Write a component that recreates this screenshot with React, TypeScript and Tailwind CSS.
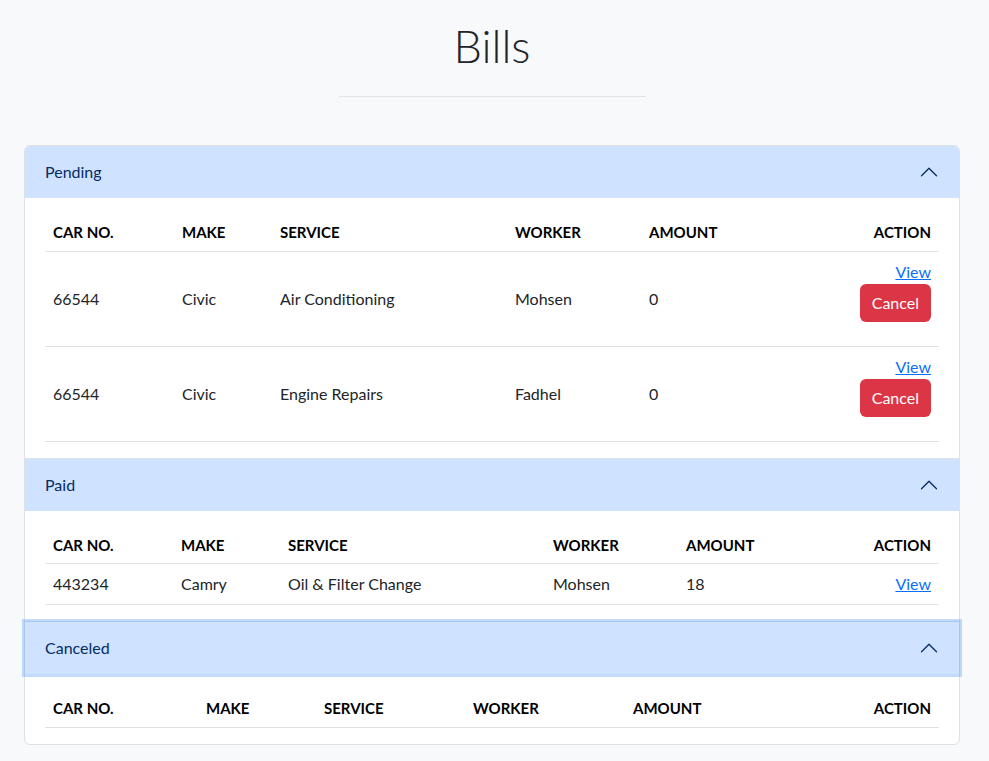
import React from "react";

type Bill = { car: string; make: string; service: string; worker: string; amount: string };

const pending: Bill[] = [
  { car: "66544", make: "Civic", service: "Air Conditioning", worker: "Mohsen", amount: "0" },
  { car: "66544", make: "Civic", service: "Engine Repairs", worker: "Fadhel", amount: "0" },
];
const paid: Bill[] = [{ car: "443234", make: "Camry", service: "Oil & Filter Change", worker: "Mohsen", amount: "18" }];

function Chevron() {
  return (
    <svg width="20" height="20" viewBox="0 0 16 16" fill="#052c65" className="rotate-180">
      <path
        fillRule="evenodd"
        d="M1.646 4.646a.5.5 0 0 1 .708 0L8 10.293l5.646-5.647a.5.5 0 0 1 .708.708l-6 6a.5.5 0 0 1-.708 0l-6-6a.5.5 0 0 1 0-.708z"
      />
    </svg>
  );
}

function Header({ title, focus, first }: { title: string; focus?: boolean; first?: boolean }) {
  return (
    <div
      className={`relative flex h-[52px] items-center justify-between bg-[#cfe2ff] px-5 text-[16px] text-[#052c65] ${
        first ? "rounded-t-[5px]" : ""
      } ${focus ? "z-10 shadow-[0_0_0_3px_rgba(13,110,253,0.25)]" : ""}`}
    >
      <span>{title}</span>
      <Chevron />
    </div>
  );
}

function Table({ widths, rows, cancel }: { widths: string[]; rows: Bill[]; cancel?: boolean }) {
  const heads = ["CAR NO.", "MAKE", "SERVICE", "WORKER", "AMOUNT"];
  return (
    <table className="w-full table-fixed border-collapse text-[16px] text-[#212529]">
      <colgroup>
        {widths.map((w, i) => (
          <col key={i} style={{ width: w }} />
        ))}
        <col />
      </colgroup>
      <thead>
        <tr className="border-b border-[#dee2e6]">
          {heads.map((h) => (
            <th key={h} className="h-[37px] px-2 text-left text-[15px] font-bold text-black">
              {h}
            </th>
          ))}
          <th className="px-2 text-right text-[15px] font-bold text-black">ACTION</th>
        </tr>
      </thead>
      <tbody>
        {rows.map((r, i) => (
          <tr key={i} className="border-b border-[#dee2e6]">
            <td className="px-2 align-middle">{r.car}</td>
            <td className="px-2 align-middle">{r.make}</td>
            <td className="px-2 align-middle">{r.service}</td>
            <td className="px-2 align-middle">{r.worker}</td>
            <td className="px-2 align-middle">{r.amount}</td>
            <td className={`px-2 text-right ${cancel ? "pt-2 pb-6" : "h-[41px]"}`}>
              <div className="leading-6">
                <a href="#" className="text-[#0d6efd] underline">
                  View
                </a>
              </div>
              {cancel && (
                <div>
                  <button className="h-[38px] rounded-[6px] bg-[#dc3545] px-3 text-[16px] text-white">Cancel</button>
                </div>
              )}
            </td>
          </tr>
        ))}
      </tbody>
    </table>
  );
}

export default function App() {
  return (
    <div className="min-h-[761px] bg-[#f8f9fa] pt-[17px] pb-4" style={{ fontFamily: "Lato, 'Liberation Sans', sans-serif" }}>
      <div className="w-[984px]">
        <h1 className="text-center text-[45px] leading-[58px] font-light text-[#212529]">Bills</h1>
        <hr className="mx-auto mt-[21px] w-[307px] border-t border-[#e3e4e6]" />
      </div>
      <div className="mx-[24px] mt-[48px] w-[936px] rounded-[6px] border border-[#dee2e6] bg-white">
        <Header title="Pending" first />
        <div className="px-5 py-4">
          <Table widths={["129px", "98px", "235px", "134px", "auto"]} rows={pending} cancel />
        </div>
        <div className="border-t border-[#dee2e6]">
          <Header title="Paid" />
          <div className="px-5 py-4">
            <Table widths={["128px", "107px", "265px", "133px", "auto"]} rows={paid} />
          </div>
        </div>
        <div className="border-t border-[#dee2e6]">
          <Header title="Canceled" focus />
          <div className="px-5 py-4">
            <Table widths={["153px", "118px", "149px", "160px", "auto"]} rows={[]} />
          </div>
        </div>
      </div>
    </div>
  );
}
